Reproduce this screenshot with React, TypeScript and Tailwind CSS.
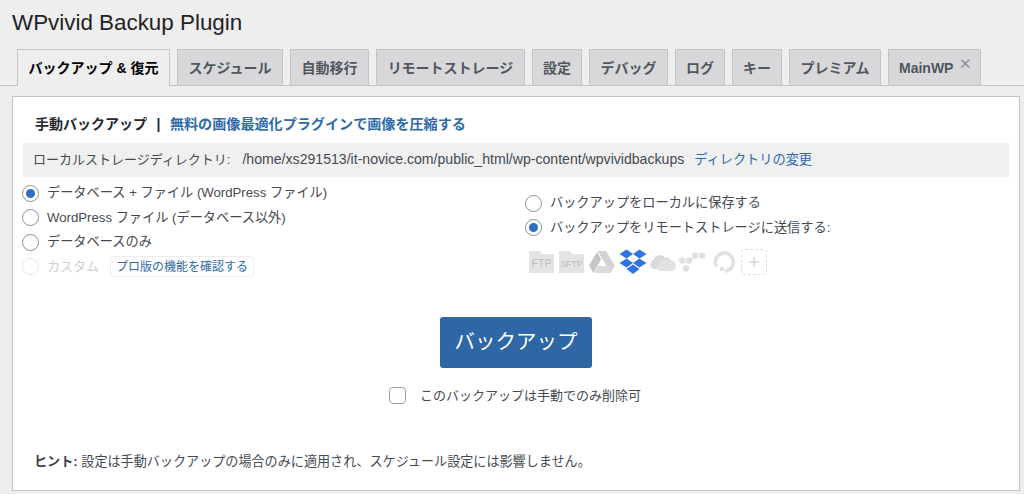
import React from 'react';

const tabs = [
  { label: 'スケジュール', width: 'w-[106px]' },
  { label: '自動移行', width: 'w-[79px]' },
  { label: 'リモートストレージ', width: 'w-[149px]' },
  { label: '設定', width: 'w-[50px]' },
  { label: 'デバッグ', width: 'w-[79px]' },
  { label: 'ログ', width: 'w-[50px]' },
  { label: 'キー', width: 'w-[50px]' },
  { label: 'プレミアム', width: 'w-[92px]' },
];

function Radio({ checked, disabled }: { checked?: boolean; disabled?: boolean }) {
  return (
    <span
      className={`flex h-[17px] w-[17px] shrink-0 items-center justify-center rounded-full border bg-white ${
        disabled ? 'border-[#e6e6e6]' : 'border-[#8c8f94]'
      }`}
    >
      {checked && <span className="h-[9px] w-[9px] rounded-full bg-[#2f6fc0]" />}
    </span>
  );
}

function Option({ label, checked }: { label: string; checked?: boolean }) {
  return (
    <div className="flex h-[24.5px] items-center gap-2">
      <Radio checked={checked} />
      <span>{label}</span>
    </div>
  );
}

function FolderIcon({ label, small }: { label: string; small?: boolean }) {
  return (
    <svg width="25" height="22" viewBox="0 0 25 22">
      <path d="M0 0h11l2 3h12v19H0z" fill="#e4e4e4" />
      <text
        x="12.500"
        y="16"
        textAnchor="middle"
        fontFamily="Liberation Sans, sans-serif"
        fontSize={small ? 8.5 : 10.500}
        fill="#bdbdbd"
      >
        {label}
      </text>
    </svg>
  );
}

function StorageIcons() {
  return (
    <div className="ml-1 flex h-[26px] items-center">
      <FolderIcon label="FTP" />
      <div className="ml-[5px]">
        <FolderIcon label="SFTP" small />
      </div>
      {/* Google Drive */}
      <svg width="26" height="22" viewBox="0 0 26 22" className="ml-[5px]">
        <path d="M8.500 0h8.500l9 15h-8.500z" fill="#d2d2d2" />
        <path d="M8 1l4.200 7.200L4.500 22 0 14.500z" fill="#c6c6c6" />
        <path d="M9.500 15H26l-4.500 7H5.500z" fill="#d9d9d9" />
      </svg>
      {/* Dropbox */}
      <svg width="28" height="26" viewBox="0 0 28 26" className="ml-[4px]">
        <path d="M7.500 0.500L14 5l-6.500 4.500L0.500 5z" fill="#2f74e6" />
        <path d="M20.500 0.500L27.500 5l-7 4.500L14 5z" fill="#2f74e6" />
        <path d="M7.500 9.500L14 14l-6.500 4.500L0.500 14z" fill="#2f74e6" />
        <path d="M20.500 9.500l7 4.500-7 4.500L14 14z" fill="#2f74e6" />
        <path d="M7.500 20L14 15.500l6.500 4.500-6.500 5z" fill="#2f74e6" />
      </svg>
      {/* OneDrive */}
      <svg width="26" height="18" viewBox="0 0 26 18" className="ml-[3px]">
        <path d="M4.500 16A4.500 4.500 0 0 1 3.500 7.200 6.500 6.500 0 0 1 15 4.500 5 5 0 0 1 21 8a4 4 0 0 1 1 8z" fill="#dadada" />
        <path d="M10 18a3.800 3.800 0 0 1 0-7.500 6 6 0 0 1 10.500-1.500 4.500 4.500 0 0 1 1.500 9z" fill="#e2e2e2" />
      </svg>
      {/* S3 cubes */}
      <svg width="27" height="20" viewBox="0 0 27 20" className="ml-[3px]">
        <g fill="#e0e0e0">
          <path d="M3 5l3 1.500v4L3 12 0 10.500v-4z" />
          <path d="M10 5l3 1.500v4L10 12l-3-1.500v-4z" />
          <path d="M7 13l3 1.500v4L7 20l-3-1.500v-4z" />
          <path d="M16 0l3 1.500v4L16 7l-3-1.500v-4z" />
          <path d="M23 0l3 1.500v4L23 7l-3-1.500v-4z" />
        </g>
        <path d="M12 7l3-2" stroke="#e0e0e0" strokeWidth="2" />
      </svg>
      {/* Ring */}
      <svg width="22" height="22" viewBox="0 0 22 22" className="ml-[7px]">
        <path d="M3.500 15.500A9 9 0 1 1 12 20" fill="none" stroke="#e0e0e0" strokeWidth="3.500" />
        <path d="M7 16h4v4H7z" fill="#e0e0e0" />
      </svg>
      <div className="ml-[6px] flex h-[26px] w-[26px] items-center justify-center rounded-sm border border-dashed border-[#dfdfdf]">
        <svg width="12" height="12" viewBox="0 0 12 12">
          <path d="M6 1v10M1 6h10" stroke="#d4d4d4" strokeWidth="1.500" />
        </svg>
      </div>
    </div>
  );
}

export default function App() {
  return (
    <div className="h-[494px] w-[1024px] overflow-hidden bg-[#eeeeee] font-['Liberation_Sans','Noto_Sans_CJK_JP',sans-serif] text-[13.2px] text-[#444a50]">
      <h1 className="pl-3 pt-[8px] text-[22.4px] leading-[30px] text-[#1d2327]">WPvivid Backup Plugin</h1>

      {/* Tabs */}
      <div className="mt-[11px] flex h-[37px] gap-[7px] border-b border-[#c3c4c7] pl-[17px]">
        <div className="flex h-[37px] w-[153px] items-center justify-center border border-b-0 border-[#c3c4c7] bg-[#eeeeee] text-sm font-bold text-black">
          バックアップ & 復元
        </div>
        {tabs.map((tab) => (
          <div
            key={tab.label}
            className={`flex h-9 items-center justify-center border border-b-0 border-[#c3c4c7] bg-[#d8d8da] text-sm font-bold text-[#50575e] ${tab.width}`}
          >
            {tab.label}
          </div>
        ))}
        <div className="relative flex h-9 w-[93px] items-center border border-b-0 border-[#c3c4c7] bg-[#d8d8da] pl-[10px] text-sm font-bold text-[#50575e]">
          MainWP
          <span className="absolute right-[8px] top-[6px] text-[15px] font-normal leading-[15px] text-[#8a8f94]">✕</span>
        </div>
      </div>

      {/* Panel */}
      <div className="ml-3 mt-[10px] h-[395px] w-[1008px] border border-[#c3c4c7] bg-white px-[10px]">
        <div className="flex h-[46px] items-end pb-[9px] pl-[12px] text-sm font-bold text-[#23282d]">
          <span>手動バックアップ</span>
          <span className="mx-[9.500px]">|</span>
          <span className="text-[14.1px] text-[#2f6aa8]">無料の画像最適化プラグインで画像を圧縮する</span>
        </div>

        <div className="flex h-[34px] items-center bg-[#f0f0f0] pl-[10px] text-[13px]">
          <span>ローカルストレージディレクトリ:</span>
          <span className="ml-[12px] text-[14.1px]">/home/xs291513/it-novice.com/public_html/wp-content/wpvividbackups</span>
          <span className="ml-[10px] text-[13.2px] text-[#2f6aa8]">ディレクトリの変更</span>
        </div>

        <div className="mt-[3px] flex">
          <div className="ml-[-1px] w-[503px] pt-[1px]">
            <Option label="データベース + ファイル (WordPress ファイル)" checked />
            <Option label="WordPress ファイル (データベース以外)" />
            <Option label="データベースのみ" />
            <div className="flex h-[24.5px] items-center gap-2">
              <Radio disabled />
              <span className="text-[13px] text-[#d0d0d0]">カスタム</span>
              <span className="ml-[3px] flex h-[21px] items-center rounded border border-[#ededed] px-[5px] text-xs text-[#2f6aa8]">
                プロ版の機能を確認する
              </span>
            </div>
          </div>
          <div className="pt-[11px]">
            <Option label="バックアップをローカルに保存する" />
            <Option label="バックアップをリモートストレージに送信する:" checked />
            <div className="mt-[9px]">
              <StorageIcons />
            </div>
          </div>
        </div>

        <div className="mt-[38px] flex flex-col items-center">
          <div className="flex h-[51px] w-[152px] items-center justify-center rounded-[3px] bg-[#2e66a6] text-[20.5px] text-white">
            バックアップ
          </div>
          <div className="mt-[18px] flex items-center pr-[2px] text-[13px]">
            <span className="h-[17px] w-[17px] rounded-[4px] border border-[#a0a0a0] bg-white" />
            <span className="ml-[14px]">このバックアップは手動でのみ削除可</span>
          </div>
        </div>

        <p className="mt-[46px] pl-[11px] text-[13.1px]">
          <strong className="text-[#3c434a]">ヒント:</strong> 設定は手動バックアップの場合のみに適用され、スケジュール設定には影響しません。
        </p>
      </div>
    </div>
  );
}
